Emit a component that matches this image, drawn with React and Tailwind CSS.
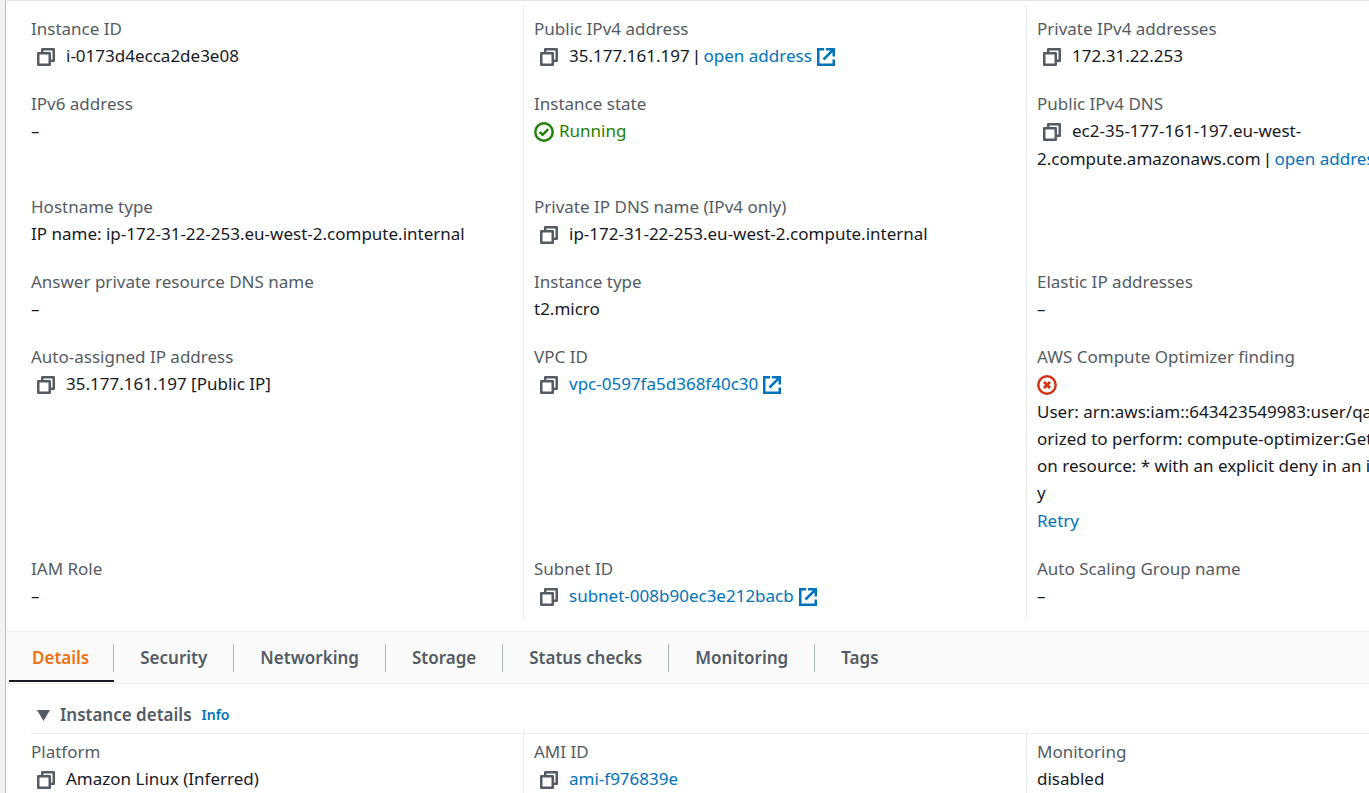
import React from "react";

const CopyIcon = () => (
  <svg viewBox="0 0 18 18" className="size-[18px]" fill="none" stroke="currentColor" strokeWidth="2.5" strokeLinejoin="round" aria-hidden="true">
    <path d="M1.25 5.25h11.5v11.5H1.25z" />
    <path d="M5.25 5V1.25h11.5v11.5H13" />
  </svg>
);

const ExternalIcon = () => (
  <svg viewBox="0 0 18 18" className="ml-[5px] inline-block size-[18px] align-[-4px]" fill="none" stroke="currentColor" strokeWidth="2.5" aria-hidden="true">
    <path d="M7.2 1.25H1.25v15.5h15.5V11.5" />
    <path d="M9 1.25h7.75V8.5M16.4 1.6L6.5 11.5" />
  </svg>
);

const OkIcon = () => (
  <svg viewBox="0 0 20 20" className="mr-[5px] inline-block size-5 align-[-5px]" fill="none" stroke="currentColor" strokeWidth="2.4" aria-hidden="true">
    <circle cx="10" cy="10" r="8.7" />
    <path d="M5.6 9.8l3 3 5.6-5.6" />
  </svg>
);

const ErrorIcon = () => (
  <svg viewBox="0 0 20 20" className="inline-block size-5 align-[-5px] text-[#d13212]" fill="none" stroke="currentColor" strokeWidth="2.4" role="img" aria-label="Error">
    <circle cx="10" cy="10" r="8.7" />
    <path strokeWidth="2.8" d="M7 7l6 6M13 7l-6 6" />
  </svg>
);

const Copy = () => (
  <button type="button" aria-label="Copy" className="mr-[11px] ml-1.5 inline-block align-[-4px] text-[#545b64]">
    <CopyIcon />
  </button>
);

const Link = ({ external, children }) => (
  <a href="#" className="text-[#0073bb]">
    {children}
    {external && <ExternalIcon />}
  </a>
);

const Bar = () => <span className="font-['Liberation_Sans',sans-serif] leading-none"> | </span>;

const GRID = "grid grid-cols-[minmax(0,503fr)_minmax(0,503fr)_minmax(0,343fr)] pl-[14px]";

function Cell({ label, first, className = "py-[10px]", children }) {
  return (
    <div className={`border-l pl-[10px] whitespace-nowrap ${first ? "border-transparent" : "border-[#eaeded]"} ${className}`}>
      {label && (
        <dl>
          <dt className="leading-[27px] text-[#545b64]">{label}</dt>
          <dd className="leading-7">{children}</dd>
        </dl>
      )}
    </div>
  );
}

const TABS = ["Details", "Security", "Networking", "Storage", "Status checks", "Monitoring", "Tags"];

export default function App() {
  return (
    <div className="min-h-screen overflow-hidden bg-[#f2f3f3] pl-[5px] font-['Noto_Sans','Open_Sans',sans-serif] text-[17px] text-[#16191f]">
      <main className="min-h-screen border-t border-l border-t-[#e4e6e6] border-l-[#b9bdbd] bg-white">
        <section aria-label="Instance summary" className={`${GRID} pt-1 pb-[11px]`}>
          <Cell first label="Instance ID"><Copy />i-0173d4ecca2de3e08</Cell>
          <Cell label="Public IPv4 address"><Copy />35.177.161.197<Bar /><Link external>open address</Link></Cell>
          <Cell label="Private IPv4 addresses"><Copy />172.31.22.253</Cell>

          <Cell first label="IPv6 address">–</Cell>
          <Cell label="Instance state"><span className="text-[#1d8102]"><OkIcon />Running</span></Cell>
          <Cell label="Public IPv4 DNS">
            <Copy />ec2-35-177-161-197.eu-west-<br />
            2.compute.amazonaws.com<Bar /><Link>open address</Link>
          </Cell>

          <Cell first label="Hostname type">IP name: ip-172-31-22-253.eu-west-2.compute.internal</Cell>
          <Cell label="Private IP DNS name (IPv4 only)"><Copy />ip-172-31-22-253.eu-west-2.compute.internal</Cell>
          <Cell />

          <Cell first label="Answer private resource DNS name">–</Cell>
          <Cell label="Instance type">t2.micro</Cell>
          <Cell label="Elastic IP addresses">–</Cell>

          <Cell first label="Auto-assigned IP address"><Copy />35.177.161.197 [Public IP]</Cell>
          <Cell label="VPC ID"><Copy /><Link external>vpc-0597fa5d368f40c30</Link></Cell>
          <Cell label="AWS Compute Optimizer finding">
            <ErrorIcon />
            <p className="mb-px leading-[27px]">
              User: arn:aws:iam::643423549983:user/qa<br />
              orized to perform: compute-optimizer:Get<br />
              on resource: * with an explicit deny in an id<br />
              y
            </p>
            <Link>Retry</Link>
          </Cell>

          <Cell first label="IAM Role">–</Cell>
          <Cell label="Subnet ID"><Copy /><Link external>subnet-008b90ec3e212bacb</Link></Cell>
          <Cell label="Auto Scaling Group name">–</Cell>
        </section>

        <nav role="tablist" aria-label="Instance sections" className="flex border-y border-[#eaeded] bg-[#fafafa] pl-[3px] font-semibold text-[#545b64]">
          {TABS.map((tab, i) => (
            <div key={tab} className="relative flex h-[51px] items-center">
              <button
                type="button"
                role="tab"
                aria-selected={i === 0}
                className={`h-7 border-[#aab7b8] leading-7 ${i === 0 ? "pr-6 pl-[23px] text-[#ec7211]" : "px-[26px]"} ${i < TABS.length - 1 ? "border-r" : ""}`}
              >
                {tab}
              </button>
              {i === 0 && <span className="absolute inset-x-0 bottom-px h-0.5 bg-[#16191f]" />}
            </div>
          ))}
        </nav>

        <section aria-label="Instance details">
          <div className="ml-[25px] flex items-center border-b border-[#eaeded] pt-[17px] pb-[4px] leading-7">
            <button type="button" aria-expanded="true" className="flex items-center pl-1.5 font-semibold text-[#545b64]">
              <svg viewBox="0 0 13 11" className="mr-[10px] h-[11px] w-[13px]" fill="currentColor" aria-hidden="true">
                <path d="M0 0h13L6.5 11z" />
              </svg>
              Instance details
            </button>
            <a href="#" className="ml-[10px] text-sm leading-7 font-semibold text-[#0073bb]">Info</a>
          </div>
          <div className={`${GRID} -mt-1`}>
            <Cell first className="pt-2" label="Platform"><Copy />Amazon Linux (Inferred)</Cell>
            <Cell className="pt-2" label="AMI ID"><Copy /><Link>ami-f976839e</Link></Cell>
            <Cell className="pt-2" label="Monitoring">disabled</Cell>
          </div>
        </section>
      </main>
    </div>
  );
}
